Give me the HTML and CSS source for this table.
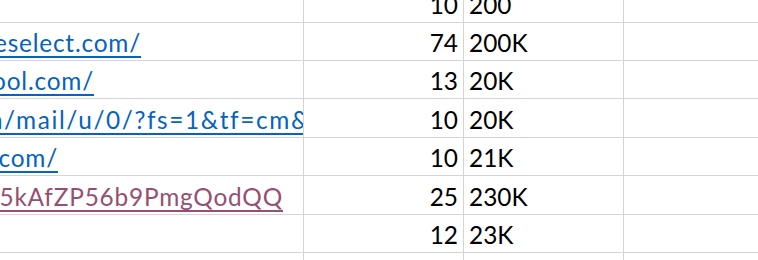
FILE: index.html
```html
<!DOCTYPE html>
<html>
<head>
<meta charset="utf-8">
<link rel="stylesheet" href="styles.css">
</head>
<body>
<div class="sheet">
  <div class="row r0">
    <div class="cell a"></div>
    <div class="cell b">10</div>
    <div class="cell c">200</div>
    <div class="cell d"></div>
  </div>
  <div class="row r38">
    <div class="cell a"><a class="link e1" href="#">https://www.homeselect.com/</a></div>
    <div class="cell b">74</div>
    <div class="cell c">200K</div>
    <div class="cell d"></div>
  </div>
  <div class="row r38">
    <div class="cell a"><a class="link e2" href="#">https://www.myschool.com/</a></div>
    <div class="cell b">13</div>
    <div class="cell c">20K</div>
    <div class="cell d"></div>
  </div>
  <div class="row r39">
    <div class="cell a start"><a class="link wide e3" href="#">com/mail/u/0/?fs=1&amp;tf=cm&amp;s</a></div>
    <div class="cell b">10</div>
    <div class="cell c">20K</div>
    <div class="cell d"></div>
  </div>
  <div class="row r38">
    <div class="cell a"><a class="link e4" href="#">https://www.example.com/</a></div>
    <div class="cell b">10</div>
    <div class="cell c">21K</div>
    <div class="cell d"></div>
  </div>
  <div class="row r39">
    <div class="cell a"><a class="link visited e5" href="#">https://drive.google.com/open?id=1x5kAfZP56b9PmgQodQQ</a></div>
    <div class="cell b">25</div>
    <div class="cell c">230K</div>
    <div class="cell d"></div>
  </div>
  <div class="row r38">
    <div class="cell a"></div>
    <div class="cell b">12</div>
    <div class="cell c">23K</div>
    <div class="cell d"></div>
  </div>
  <div class="row r8">
    <div class="cell a"></div>
    <div class="cell b"></div>
    <div class="cell c"></div>
    <div class="cell d"></div>
  </div>
</div>
</body>
</html>
```

FILE: styles.css
```css
html, body {
  margin: 0;
  padding: 0;
  background: #ffffff;
}
body {
  width: 758px;
  height: 260px;
  overflow: hidden;
  font-family: Lato, "Open Sans", sans-serif;
  font-size: 24.4px;
  color: #000000;
}
.sheet {
  display: flex;
  flex-direction: column;
}
.row {
  display: grid;
  grid-template-columns: 304px 160px 160px 1fr;
  box-sizing: border-box;
  border-bottom: 1px solid #d4d4d4;
}
.r0 { height: 23px; }
.r38 { height: 38px; }
.r39 { height: 39px; }
.r8 { height: 8px; border-bottom: none; }
.cell {
  display: flex;
  align-items: flex-end;
  overflow: hidden;
  white-space: nowrap;
  line-height: 24px;
  padding-bottom: 5px;
  box-sizing: border-box;
  border-right: 1px solid #d4d4d4;
}
.r8 .cell {
  padding-bottom: 0;
}
.a {
  justify-content: flex-end;
}
.a.start {
  justify-content: flex-start;
}
.b {
  justify-content: flex-end;
  padding-right: 5px;
}
.c {
  justify-content: flex-start;
  padding-left: 5px;
}
.d {
  border-right: none;
}
.link {
  color: #0563c1;
  text-decoration: underline;
  text-decoration-thickness: 2px;
  text-underline-offset: 4px;
  letter-spacing: 0.8px;
  flex-shrink: 0;
}
.link.wide {
  letter-spacing: 1.6px;
}
.visited {
  color: #954f72;
}
.e1 { margin-right: 162px; }
.e2 { margin-right: 209px; }
.e3 { margin-left: -46px; }
.e4 { margin-right: 245px; }
.e5 { margin-right: 20px; }
```
